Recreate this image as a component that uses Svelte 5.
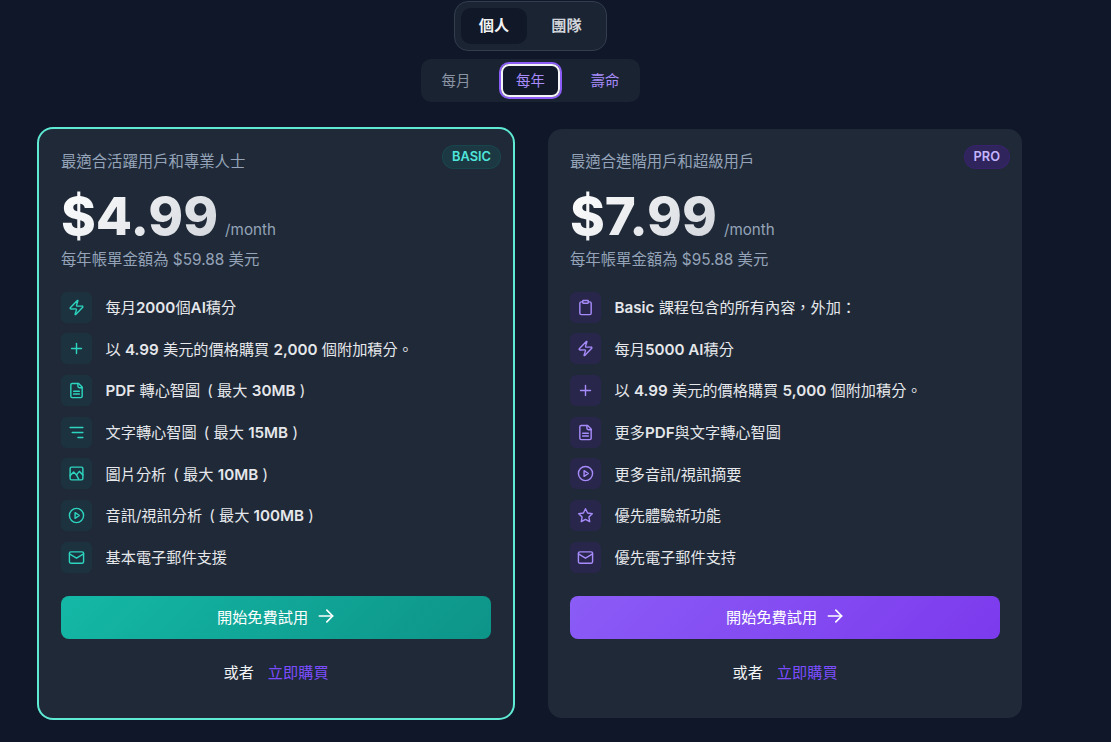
<script>
	const icons = {
		zap: '<path d="M4 14a1 1 0 0 1-.78-1.63l9.9-10.2a.5.5 0 0 1 .86.46l-1.92 6.02A1 1 0 0 0 13 10h7a1 1 0 0 1 .78 1.63l-9.9 10.2a.5.5 0 0 1-.86-.46l1.92-6.02A1 1 0 0 0 11 14z"/>',
		plus: '<path d="M5 12h14"/><path d="M12 5v14"/>',
		file: '<path d="M15 2H6a2 2 0 0 0-2 2v16a2 2 0 0 0 2 2h12a2 2 0 0 0 2-2V7Z"/><path d="M14 2v4a2 2 0 0 0 2 2h4"/><path d="M16 13H8"/><path d="M16 17H8"/>',
		lines: '<path d="M3 5h18"/><path d="M6 12h15"/><path d="M14 19h7"/>',
		image: '<rect x="3" y="3" width="18" height="18" rx="2"/><path d="m3 15 5-5 4 4 4-5 5 5"/><path d="M15 20l-3-6"/>',
		play: '<circle cx="12" cy="12" r="10"/><path d="m10 8 6 4-6 4Z"/>',
		mail: '<rect x="2" y="4" width="20" height="16" rx="2"/><path d="m22 7-10 6L2 7"/>',
		clip: '<rect x="8" y="2" width="8" height="4" rx="1"/><path d="M16 4h2a2 2 0 0 1 2 2v14a2 2 0 0 1-2 2H6a2 2 0 0 1-2-2V6a2 2 0 0 1 2-2h2"/>',
		star: '<path d="M12 2.5l2.95 5.98 6.6.96-4.77 4.65 1.12 6.57L12 17.56l-5.9 3.1 1.12-6.57-4.77-4.65 6.6-.96z"/>'
	};

	const plans = [
		{
			key: 'basic',
			badge: 'BASIC',
			desc: '最適合活躍用戶和專業人士',
			price: '$4.99',
			billed: '每年帳單金額為 $59.88 美元',
			features: [
				['zap', '每月<b>2000</b>個<b>AI</b>積分'],
				['plus', '以 <b>4.99</b> 美元的價格購買 <b>2,000</b> 個附加積分。'],
				['file', '<b>PDF</b> 轉心智圖 \u2009( 最大 <b>30MB</b> )'],
				['lines', '文字轉心智圖 \u2009( 最大 <b>15MB</b> )'],
				['image', '圖片分析 \u2009( 最大 <b>10MB</b> )'],
				['play', '音訊/視訊分析 \u2009( 最大 <b>100MB</b> )'],
				['mail', '基本電子郵件支援']
			]
		},
		{
			key: 'pro',
			badge: 'PRO',
			desc: '最適合進階用戶和超級用戶',
			price: '$7.99',
			billed: '每年帳單金額為 $95.88 美元',
			features: [
				['clip', '<b>Basic</b> 課程包含的所有內容，外加：'],
				['zap', '每月<b>5000 AI</b>積分'],
				['plus', '以 <b>4.99</b> 美元的價格購買 <b>5,000</b> 個附加積分。'],
				['file', '更多<b>PDF</b>與文字轉心智圖'],
				['play', '更多音訊/視訊摘要'],
				['star', '優先體驗新功能'],
				['mail', '優先電子郵件支持']
			]
		}
	];
</script>

<main>
	<div class="audience">
		<button class="active">個人</button>
		<button>團隊</button>
	</div>

	<div class="period">
		<button>每月</button>
		<button class="active">每年</button>
		<button class="life">壽命</button>
	</div>

	<div class="plans">
		{#each plans as plan}
			<section class="card {plan.key}">
				<span class="badge">{plan.badge}</span>
				<p class="desc">{plan.desc}</p>
				<div class="price"><span class="amount">{plan.price}</span><span class="per">/month</span></div>
				<p class="billed">{plan.billed}</p>
				<ul>
					{#each plan.features as [icon, text]}
						<li>
							<span class="icon">
								<svg viewBox="0 0 24 24" width="17" height="17" fill="none" stroke="currentColor" stroke-width="2" stroke-linecap="round" stroke-linejoin="round">{@html icons[icon]}</svg>
							</span>
							<span class="text">{@html text}</span>
						</li>
					{/each}
				</ul>
				<button class="cta">
					開始免費試用
					<svg viewBox="0 0 24 24" width="20" height="20" fill="none" stroke="currentColor" stroke-width="2" stroke-linecap="round" stroke-linejoin="round"><path d="M4 12h16"/><path d="m13 5 7 7-7 7"/></svg>
				</button>
				<p class="alt"><span>或者</span><a href="#buy">立即購買</a></p>
			</section>
		{/each}
	</div>
</main>

<style>
	:global(*, *::before, *::after) {
		box-sizing: border-box;
		margin: 0;
		padding: 0;
	}

	:global(body) {
		background: #0f1728;
		color: #e5e7eb;
		font-family: Inter, 'Noto Sans CJK TC', sans-serif;
		height: 742px;
		overflow: hidden;
	}

	main {
		width: 1061px;
		display: flex;
		flex-direction: column;
		align-items: center;
		padding-top: 1px;
	}

	button {
		font: inherit;
		border: none;
		background: none;
		color: inherit;
	}

	.audience {
		display: flex;
		width: 153px;
		height: 50px;
		padding: 6px;
		gap: 4px;
		background: #1b2433;
		border: 1px solid #323c4c;
		border-radius: 14px;
	}

	.audience button {
		flex: 1;
		padding: 0 0 4px 2px;
		font-size: 15.2px;
		font-weight: 600;
		color: #d1d5db;
		border-radius: 10px;
	}

	.audience .active {
		flex: 0 0 66px;
		padding-left: 0;
		background: #111827;
		color: #f3f4f6;
	}

	.period {
		display: flex;
		align-items: center;
		gap: 14px;
		width: 219px;
		height: 43px;
		margin-top: 8px;
		padding: 0 4px;
		background: #1a2332;
		border-radius: 10px;
	}

	.period button {
		width: 62px;
		height: 33px;
		padding-bottom: 2px;
		font-size: 14.4px;
		color: #8b94a3;
		border-radius: 8px;
	}

	.period .active {
		width: 59px;
		color: #a78bfa;
		background: #111827;
		outline: 2px solid #f3f4f6;
		outline-offset: -2px;
		box-shadow: 0 0 0 2px #8b5cf6;
	}

	.period .life {
		color: #a78bfa;
	}

	.plans {
		display: flex;
		align-items: flex-start;
		gap: 35px;
		margin-top: 27px;
	}

	.card {
		position: relative;
		width: 474px;
		height: 589px;
		padding: 23px 22px 22px;
		background: #1f2937;
		border-radius: 14px;
	}

	.card.basic {
		box-shadow: 0 0 0 2px #5eead4;
	}

	.badge {
		position: absolute;
		top: 16px;
		right: 12px;
		height: 24px;
		padding: 0 9px 2px;
		display: flex;
		align-items: center;
		font-size: 12.8px;
		font-weight: 600;
		border: 1px solid transparent;
		border-radius: 12px;
	}

	.basic .badge {
		color: #4ee6dc;
		background: rgba(13, 148, 136, 0.15);
		border-color: rgba(13, 148, 136, 0.15);
	}

	.pro .badge {
		color: #c4b5fd;
		background: rgba(76, 29, 149, 0.4);
		border-color: rgba(76, 29, 149, 0.3);
	}

	.desc {
		font-size: 15.36px;
		line-height: 20px;
		color: #94a3b8;
	}

	.price {
		display: flex;
		align-items: baseline;
		gap: 7px;
		margin-top: 12px;
		height: 64px;
		line-height: 64px;
	}

	.amount {
		font-size: 52.8px;
		font-weight: 800;
		background: linear-gradient(135deg, #ffffff, #d1d5db);
		-webkit-background-clip: text;
		background-clip: text;
		color: transparent;
	}

	.per {
		font-size: 15.2px;
		color: #94a3b8;
	}

	.billed {
		margin-top: 1px;
		font-size: 15.36px;
		line-height: 22px;
		color: #94a3b8;
	}

	ul {
		list-style: none;
		margin-top: 20.5px;
		display: flex;
		flex-direction: column;
		gap: 10.7px;
	}

	li {
		display: flex;
		align-items: center;
		gap: 13.5px;
		height: 31px;
		font-size: 15.2px;
	}

	li :global(b) {
		font-weight: 600;
	}

	.text {
		padding-bottom: 2px;
	}

	.icon {
		flex: none;
		width: 31px;
		height: 31px;
		display: flex;
		align-items: center;
		justify-content: center;
		border-radius: 6px;
	}

	.basic .icon {
		color: #2dd4bf;
		background: rgba(13, 148, 136, 0.1);
	}

	.pro .icon {
		color: #a78bfa;
		background: rgba(76, 29, 149, 0.22);
	}

	.cta {
		display: flex;
		align-items: center;
		justify-content: center;
		gap: 8px;
		width: 100%;
		height: 43px;
		margin-top: 23.5px;
		padding: 0 0 3px 1px;
		font-size: 15.2px;
		color: #fff;
		border-radius: 8px;
	}

	.basic .cta {
		background: linear-gradient(135deg, #14b8a6, #0d9488);
	}

	.pro .cta {
		background: linear-gradient(135deg, #8b5cf6, #7c3aed);
	}

	.alt {
		display: flex;
		justify-content: center;
		gap: 14px;
		margin-top: 23px;
		font-size: 15.2px;
		line-height: 22px;
		color: #f3f4f6;
	}

	.alt a {
		color: #7c4dff;
		text-decoration: none;
	}
</style>
